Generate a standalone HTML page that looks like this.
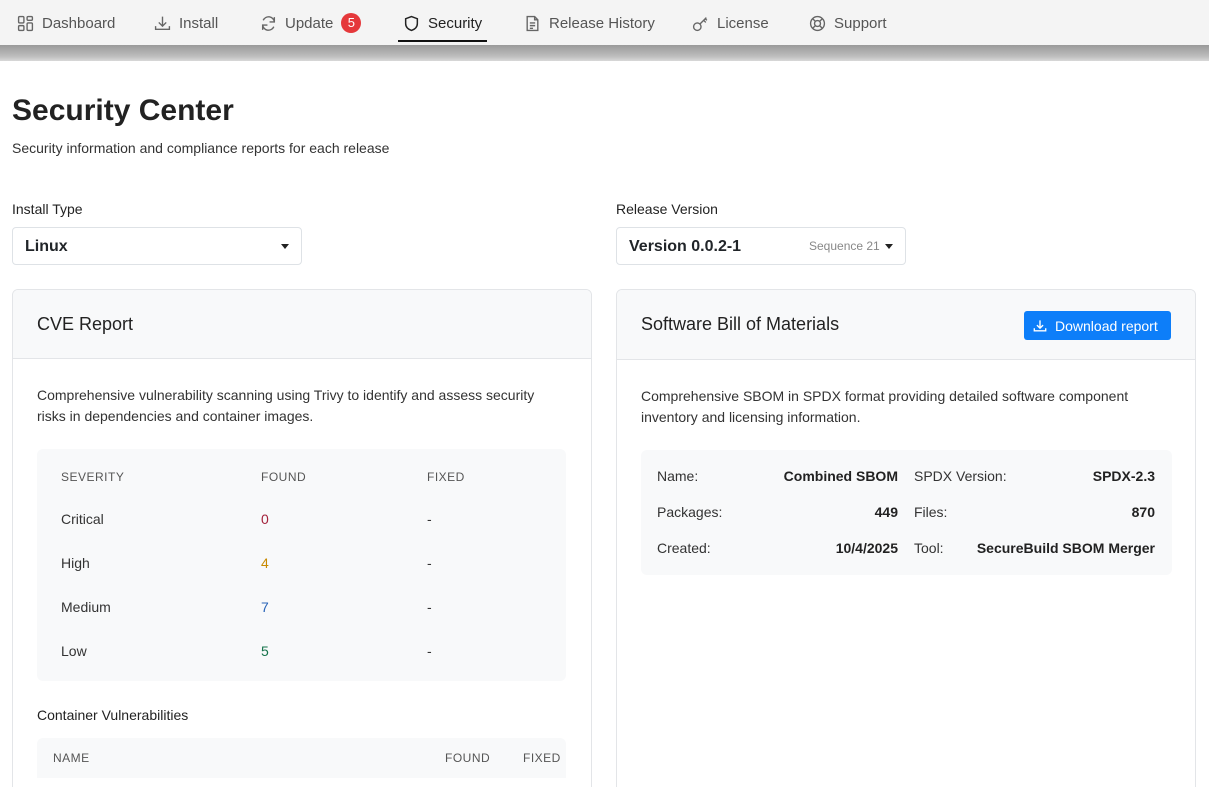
<!DOCTYPE html>
<html style="height:787px;overflow:hidden"><head><meta charset="utf-8"><style>
*{box-sizing:border-box;margin:0;padding:0}
body{width:1209px;height:787px;overflow:hidden;background:#fff;font-family:"Liberation Sans",sans-serif;color:#212529;position:relative}
.a{position:absolute;white-space:nowrap}
.nav{position:absolute;left:0;top:0;width:1209px;height:45px;background:#f4f4f4}
.band{position:absolute;left:0;top:45px;width:1209px;height:16px;background:linear-gradient(#9a9a9a,#bdbdbd 70%,#d8d8d8)}
.ni{position:absolute;top:12px;height:22px;font-size:15px;color:#555;display:flex;align-items:center}
.ni svg{margin-right:8px}
.sel{position:absolute;border:1px solid #dee2e6;border-radius:4px;background:#fff}
.card{position:absolute;border:1px solid #e3e5e8;border-radius:6px;overflow:hidden;background:#fff}
.ch{background:#f8f9fa;border-bottom:1px solid #e3e5e8;position:absolute;left:0;top:0;width:100%;height:69px}
.box{position:absolute;background:#f8f9fa;border-radius:6px}
.th{font-size:12px;color:#555;letter-spacing:.5px}
.td{font-size:14px;color:#333}
.caret{display:inline-block;border-left:4px solid transparent;border-right:4px solid transparent;border-top:5px solid #222}
</style></head><body>
<div class="nav"></div>
<div class="ni" style="left:17px"><svg width="17" height="17" viewBox="0 0 16 16" fill="none" stroke="#666" stroke-width="1.3"><rect x="1.5" y="1.5" width="5" height="6" rx="1"/><rect x="9.5" y="1.5" width="5" height="3.5" rx="1"/><rect x="1.5" y="10" width="5" height="4.5" rx="1"/><rect x="9.5" y="7.5" width="5" height="7" rx="1"/></svg>Dashboard</div>
<div class="ni" style="left:154px"><svg width="17" height="17" viewBox="0 0 16 16" fill="none" stroke="#666" stroke-width="1.3"><path d="M8 1.5v9M4.5 7l3.5 3.5L11.5 7M1.5 10.5v3h13v-3"/></svg>Install</div>
<div class="ni" style="left:260px"><svg width="17" height="17" viewBox="0 0 16 16" fill="none" stroke="#666" stroke-width="1.3"><path d="M13.5 6.5A5.5 5.5 0 0 0 3 5M2.5 9.5A5.5 5.5 0 0 0 13 11M13.5 2v4.5H9M2.5 14V9.5H7"/></svg>Update<span style="display:inline-block;width:20px;height:20px;border-radius:10px;background:#e5383b;color:#fff;font-size:13px;text-align:center;line-height:20px;margin-left:8px">5</span></div>
<div class="ni" style="left:403px;color:#222"><svg width="17" height="17" viewBox="0 0 16 16" fill="none" stroke="#222" stroke-width="1.4"><path d="M8 1.5l5.5 2v4.5c0 3.5-2.5 5.5-5.5 6.5-3-1-5.5-3-5.5-6.5V3.5z"/></svg>Security</div>
<div class="a" style="left:398px;top:40px;width:89px;height:2px;background:#111"></div>
<div class="ni" style="left:524px"><svg width="17" height="17" viewBox="0 0 16 16" fill="none" stroke="#666" stroke-width="1.3"><path d="M3 1.5h7l3 3v10H3zM10 1.5v3h3M5.5 7.5h5M5.5 10h5M5.5 12.5h3"/></svg>Release History</div>
<div class="ni" style="left:692px"><svg width="17" height="17" viewBox="0 0 16 16" fill="none" stroke="#666" stroke-width="1.3"><circle cx="5" cy="11" r="3.5"/><path d="M7.5 8.5l6-6M11 5l2 2M12.5 3.5l1.5 1.5"/></svg>License</div>
<div class="ni" style="left:809px"><svg width="17" height="17" viewBox="0 0 16 16" fill="none" stroke="#666" stroke-width="1.3"><circle cx="8" cy="8" r="6.5"/><circle cx="8" cy="8" r="2.8"/><path d="M3.4 3.4l2.6 2.6M12.6 3.4L10 6M3.4 12.6L6 10M12.6 12.6L10 10"/></svg>Support</div>
<div class="band"></div>

<div class="a" style="left:12px;top:94px;font-size:30px;font-weight:bold;color:#222">Security Center</div>
<div class="a" style="left:12px;top:140px;font-size:14px;color:#333">Security information and compliance reports for each release</div>

<div class="a" style="left:12px;top:201px;font-size:14px;color:#222">Install Type</div>
<div class="sel" style="left:12px;top:227px;width:290px;height:38px"><span class="a" style="left:12px;top:10px;font-size:16px;font-weight:bold">Linux</span><span class="a caret" style="left:268px;top:16px"></span></div>
<div class="a" style="left:616px;top:201px;font-size:14px;color:#222">Release Version</div>
<div class="sel" style="left:616px;top:227px;width:290px;height:38px"><span class="a" style="left:12px;top:10px;font-size:16px;font-weight:bold">Version 0.0.2-1</span><span class="a" style="left:192px;top:11px;font-size:12px;color:#888">Sequence 21</span><span class="a caret" style="left:268px;top:16px"></span></div>

<div class="card" style="left:12px;top:289px;width:580px;height:520px">
<div class="ch"></div>
<div class="a" style="left:24px;top:24px;font-size:18px;color:#222">CVE Report</div>
<div class="a" style="left:24px;top:95px;font-size:14px;color:#333;line-height:21px">Comprehensive vulnerability scanning using Trivy to identify and assess security<br>risks in dependencies and container images.</div>
<div class="box" style="left:24px;top:159px;width:529px;height:232px"></div>
<div class="a th" style="left:48px;top:180px">SEVERITY</div><div class="a th" style="left:248px;top:180px">FOUND</div><div class="a th" style="left:414px;top:180px">FIXED</div>
<div class="a td" style="left:48px;top:221px">Critical</div><div class="a td" style="left:248px;top:221px;color:#a3213a">0</div><div class="a td" style="left:414px;top:221px">-</div>
<div class="a td" style="left:48px;top:265px">High</div><div class="a td" style="left:248px;top:265px;color:#c98a00">4</div><div class="a td" style="left:414px;top:265px">-</div>
<div class="a td" style="left:48px;top:309px">Medium</div><div class="a td" style="left:248px;top:309px;color:#2a65b8">7</div><div class="a td" style="left:414px;top:309px">-</div>
<div class="a td" style="left:48px;top:353px">Low</div><div class="a td" style="left:248px;top:353px;color:#15734a">5</div><div class="a td" style="left:414px;top:353px">-</div>
<div class="a" style="left:24px;top:417px;font-size:14px;color:#222">Container Vulnerabilities</div>
<div class="box" style="left:24px;top:448px;width:529px;height:40px;border-radius:6px 6px 0 0"></div>
<div class="a th" style="left:40px;top:461px">NAME</div><div class="a th" style="left:432px;top:461px">FOUND</div><div class="a th" style="left:510px;top:461px">FIXED</div>
</div>

<div class="card" style="left:616px;top:289px;width:580px;height:520px">
<div class="ch" style="height:70px"></div>
<div class="a" style="left:24px;top:24px;font-size:18px;color:#222">Software Bill of Materials</div>
<div class="a" style="left:407px;top:21px;width:147px;height:29px;background:#0d7ef9;border-radius:3px;color:#fff;font-size:14px;display:flex;align-items:center;padding-left:9px"><svg width="14" height="14" viewBox="0 0 16 16" fill="none" stroke="#fff" stroke-width="1.6" style="margin-right:8px"><path d="M8 1.5v9M4.5 7l3.5 3.5L11.5 7M1.5 10.5v3h13v-3"/></svg>Download report</div>
<div class="a" style="left:24px;top:96px;font-size:14px;color:#333;line-height:21px">Comprehensive SBOM in SPDX format providing detailed software component<br>inventory and licensing information.</div>
<div class="box" style="left:24px;top:160px;width:531px;height:125px"></div>
<div class="a td" style="left:40px;top:178px">Name:</div><div class="a td" style="right:297px;top:178px;font-weight:bold;color:#222">Combined SBOM</div>
<div class="a td" style="left:297px;top:178px">SPDX Version:</div><div class="a td" style="right:40px;top:178px;font-weight:bold;color:#222">SPDX-2.3</div>
<div class="a td" style="left:40px;top:214px">Packages:</div><div class="a td" style="right:297px;top:214px;font-weight:bold;color:#222">449</div>
<div class="a td" style="left:297px;top:214px">Files:</div><div class="a td" style="right:40px;top:214px;font-weight:bold;color:#222">870</div>
<div class="a td" style="left:40px;top:250px">Created:</div><div class="a td" style="right:297px;top:250px;font-weight:bold;color:#222">10/4/2025</div>
<div class="a td" style="left:297px;top:250px">Tool:</div><div class="a td" style="right:40px;top:250px;font-weight:bold;color:#222">SecureBuild SBOM Merger</div>
</div>
</body></html>
